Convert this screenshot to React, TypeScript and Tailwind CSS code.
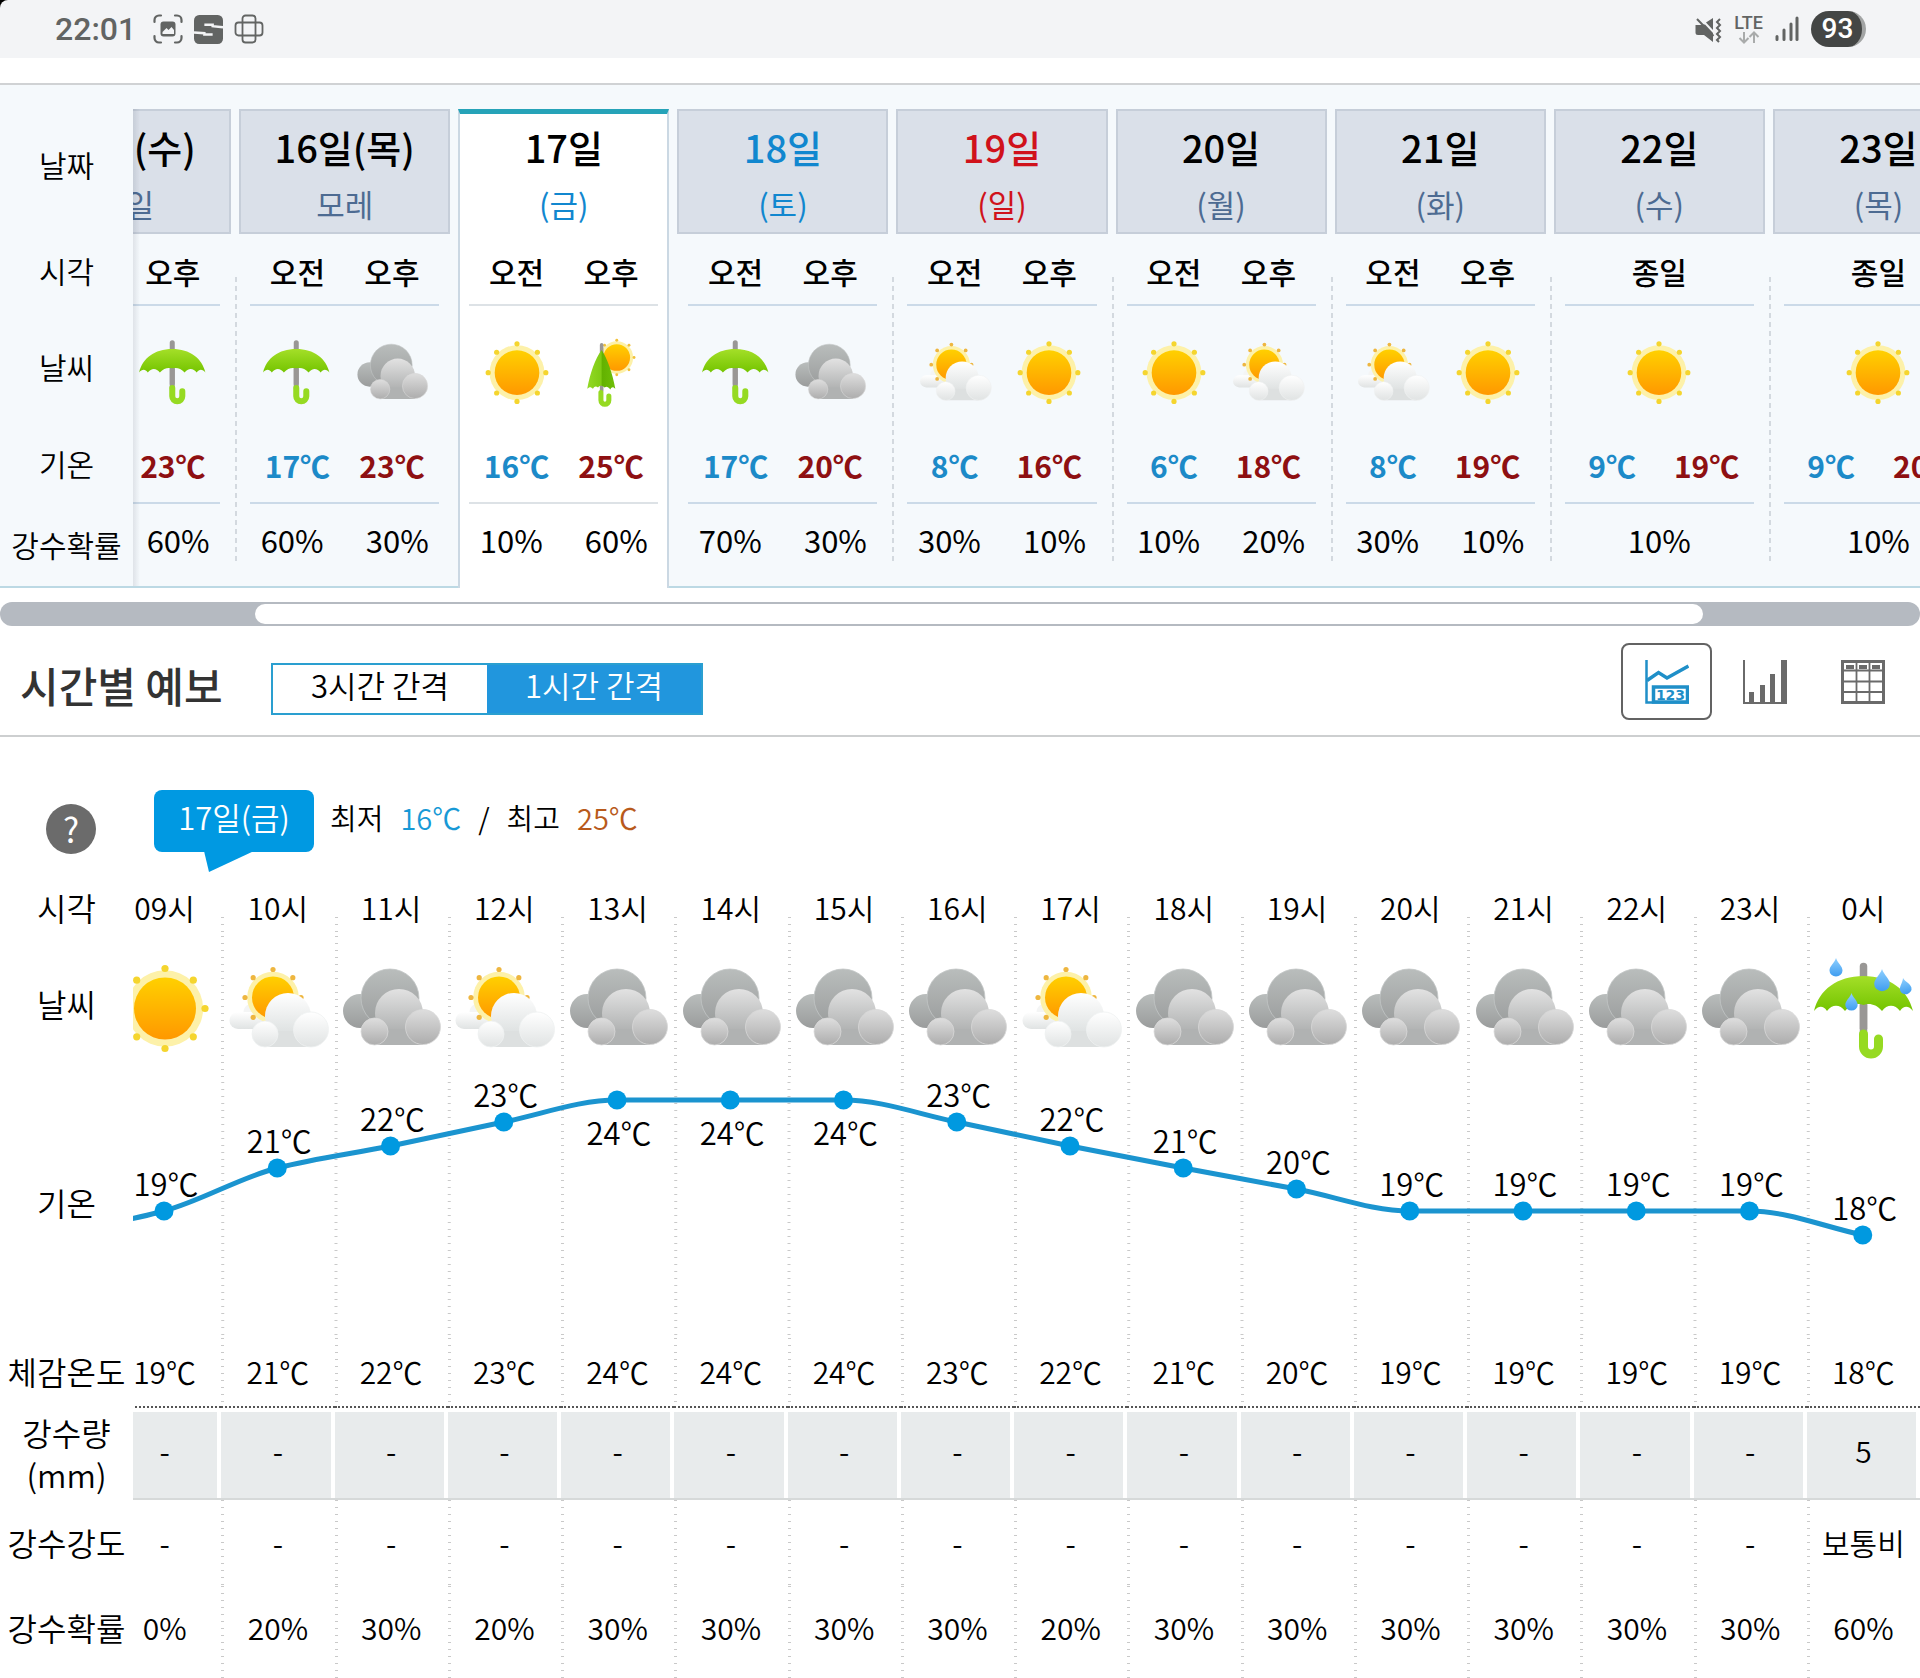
import { useLayoutEffect, useRef, useState } from "react";
import type { ReactNode } from "react";
import clsx from "clsx";

type Weather = "sun" | "cloudy" | "partly" | "umbrella" | "clearing" | "rain";

const days: {
  date: string;
  sub: string;
  tone?: "sat" | "sun";
  active?: boolean;
  times: string[];
  icons: Weather[];
  temps: [string, string];
  rain: string[];
}[] = [
  { date: "15일(수)", sub: "내일", times: ["오전", "오후"], icons: ["umbrella", "umbrella"], temps: ["17℃", "23℃"], rain: ["60%", "60%"] },
  { date: "16일(목)", sub: "모레", times: ["오전", "오후"], icons: ["umbrella", "cloudy"], temps: ["17℃", "23℃"], rain: ["60%", "30%"] },
  { date: "17일", sub: "(금)", active: true, times: ["오전", "오후"], icons: ["sun", "clearing"], temps: ["16℃", "25℃"], rain: ["10%", "60%"] },
  { date: "18일", sub: "(토)", tone: "sat", times: ["오전", "오후"], icons: ["umbrella", "cloudy"], temps: ["17℃", "20℃"], rain: ["70%", "30%"] },
  { date: "19일", sub: "(일)", tone: "sun", times: ["오전", "오후"], icons: ["partly", "sun"], temps: ["8℃", "16℃"], rain: ["30%", "10%"] },
  { date: "20일", sub: "(월)", times: ["오전", "오후"], icons: ["sun", "partly"], temps: ["6℃", "18℃"], rain: ["10%", "20%"] },
  { date: "21일", sub: "(화)", times: ["오전", "오후"], icons: ["partly", "sun"], temps: ["8℃", "19℃"], rain: ["30%", "10%"] },
  { date: "22일", sub: "(수)", times: ["종일"], icons: ["sun"], temps: ["9℃", "19℃"], rain: ["10%"] },
  { date: "23일", sub: "(목)", times: ["종일"], icons: ["sun"], temps: ["9℃", "20℃"], rain: ["10%"] },
];

const hours: { time: string; icon: Weather; temp: number; rain: string; amount?: string; level?: string }[] = [
  { time: "09시", icon: "sun", temp: 19, rain: "0%" },
  { time: "10시", icon: "partly", temp: 21, rain: "20%" },
  { time: "11시", icon: "cloudy", temp: 22, rain: "30%" },
  { time: "12시", icon: "partly", temp: 23, rain: "20%" },
  { time: "13시", icon: "cloudy", temp: 24, rain: "30%" },
  { time: "14시", icon: "cloudy", temp: 24, rain: "30%" },
  { time: "15시", icon: "cloudy", temp: 24, rain: "30%" },
  { time: "16시", icon: "cloudy", temp: 23, rain: "30%" },
  { time: "17시", icon: "partly", temp: 22, rain: "20%" },
  { time: "18시", icon: "cloudy", temp: 21, rain: "30%" },
  { time: "19시", icon: "cloudy", temp: 20, rain: "30%" },
  { time: "20시", icon: "cloudy", temp: 19, rain: "30%" },
  { time: "21시", icon: "cloudy", temp: 19, rain: "30%" },
  { time: "22시", icon: "cloudy", temp: 19, rain: "30%" },
  { time: "23시", icon: "cloudy", temp: 19, rain: "30%" },
  { time: "0시", icon: "rain", temp: 18, rain: "60%", amount: "5", level: "보통비" },
];

/* gradients shared by all weather icons */
function IconDefs() {
  const stops: [string, string, string][] = [
    ["g-sun", "#ffd000", "#ff9800"],
    ["g-back", "#b9bdbc", "#9a9c9c"],
    ["g-front", "#e2e2e2", "#a9abab"],
    ["g-puff", "#dedede", "#adadad"],
    ["g-white", "#ffffff", "#d9dddd"],
    ["g-wpuff", "#ffffff", "#e0e3e3"],
    ["g-green", "#a4df28", "#74c400"],
    ["g-drop", "#8fd0ff", "#3f9df0"],
  ];
  return (
    <svg className="absolute size-0" aria-hidden="true">
      <defs>
        {stops.map(([id, from, to]) => (
          <linearGradient key={id} id={id} x1="0" y1="0" x2="0" y2="1">
            <stop offset="0" stopColor={from} />
            <stop offset="1" stopColor={to} />
          </linearGradient>
        ))}
        <linearGradient id="g-closed" x1="0" y1="0" x2="1" y2="0">
          <stop offset="0" stopColor="#93d925" />
          <stop offset="0.5" stopColor="#7fcb14" />
          <stop offset="0.52" stopColor="#62b100" />
          <stop offset="1" stopColor="#6fbf08" />
        </linearGradient>
      </defs>
    </svg>
  );
}

function Sun({ cx, cy, r, ring, dot, color = "#f5d52e" }: { cx: number; cy: number; r: number; ring: number; dot: number; color?: string }) {
  return (
    <>
      <circle cx={cx} cy={cy} r={r * 1.23} fill="#fdf1a9" />
      {[0, 45, 90, 135, 180, 225, 270, 315].map((a) => (
        <circle
          key={a}
          cx={cx + ring * Math.cos((a * Math.PI) / 180)}
          cy={cy + ring * Math.sin((a * Math.PI) / 180)}
          r={dot}
          fill={color}
        />
      ))}
      <circle cx={cx} cy={cy} r={r} fill="url(#g-sun)" />
    </>
  );
}

function Umbrella() {
  return (
    <>
      <path d="M50.500 7.500V75" stroke="#999795" strokeWidth="7.500" strokeLinecap="round" />
      <path
        d="M1 52C6 31 24 17 50.500 17S95 31 100 52C96 47 91 46 87 52C82 45 74 45 69 52C63 45 56 44 50.500 46C45 44 38 45 32 52C27 45 19 45 14 52C10 46 5 47 1 52Z"
        fill="url(#g-green)"
      />
      <path d="M50.500 46V70" stroke="#999795" strokeWidth="7.500" />
      <path d="M50.500 75V87.500a7.500 7.500 0 0 0 15 0V80" stroke="#96da22" strokeWidth="9" strokeLinecap="round" fill="none" />
    </>
  );
}

function Drop({ x, y, s, turn = 0 }: { x: number; y: number; s: number; turn?: number }) {
  return (
    <path
      d="M0 0C1.500 5 6.500 8 6.500 12.500A6.500 6 0 0 1 -6.500 12.500C-6.500 8 -1.500 5 0 0Z"
      transform={`translate(${x} ${y}) rotate(${turn}) scale(${s})`}
      fill="url(#g-drop)"
    />
  );
}

function WeatherIcon({ kind, className }: { kind: Weather; className: string }) {
  return (
    <svg viewBox="0 0 100 100" className={clsx("shrink-0 overflow-visible", className)} fill="none" aria-hidden="true">
      {kind === "sun" && <Sun cx={50} cy={49.5} r={31} ring={40} dot={3.6} />}
      {kind === "cloudy" && (
        <>
          <circle cx="19" cy="52" r="17" fill="url(#g-back)" />
          <circle cx="49" cy="39" r="29" fill="url(#g-back)" stroke="#c2c5c5" strokeWidth="0.8" />
          <path d="M33.500 86V68L58 54L82 60V86Z" fill="#b3b5b5" />
          <circle cx="58" cy="54" r="24" fill="url(#g-front)" />
          <path d="M33 70H82V86H33Z" fill="#b0b2b2" />
          <circle cx="82" cy="68" r="17.500" fill="url(#g-puff)" stroke="#d8d8d8" strokeWidth="0.8" />
          <circle cx="33.500" cy="72.500" r="13.500" fill="url(#g-puff)" stroke="#d8d8d8" strokeWidth="0.8" />
        </>
      )}
      {kind === "partly" && (
        <>
          <circle cx="24" cy="53" r="8.500" fill="#f4f5f5" />
          <path d="M10 53H36V70H10A8.500 8.500 0 0 1 10 53Z" fill="url(#g-wpuff)" />
          <Sun cx={45} cy={38.5} r={21} ring={28} dot={2.6} color="#eeb63f" />
          <circle cx="60" cy="57" r="23" fill="url(#g-white)" />
          <path d="M37 72H83V88H37Z" fill="#dde0e0" />
          <circle cx="83" cy="70.500" r="17.500" fill="url(#g-wpuff)" stroke="#eff1f1" strokeWidth="0.8" />
          <circle cx="37" cy="75" r="13" fill="url(#g-wpuff)" stroke="#eff1f1" strokeWidth="0.8" />
        </>
      )}
      {kind === "umbrella" && (
        <g transform="translate(2 1) scale(0.93)">
          <Umbrella />
        </g>
      )}
      {kind === "rain" && (
        <>
          <Umbrella />
          <Drop x={23} y={-1} s={1} />
          <Drop x={69} y={10} s={1.2} />
          <Drop x={90} y={19} s={0.9} turn={-14} />
          <Drop x={38.5} y={34} s={0.95} />
        </>
      )}
      {kind === "clearing" && (
        <>
          <Sun cx={58} cy={28.5} r={18.5} ring={24} dot={2} color="#f2c23a" />
          <path d="M37 11V75" stroke="#999795" strokeWidth="5" strokeLinecap="round" />
          <path
            d="M37 18C45 30 52 50 56 72C53 69 51 69 49 73C46 69 44 68 41 70C38 67 34 67 32 70C29 68 27 68 25 72C22 69 20 69 17 72C21 50 28 30 37 18Z"
            fill="url(#g-closed)"
          />
          <path d="M36 77V88a5.500 5.500 0 0 0 11 0V82" stroke="#96da22" strokeWidth="7" strokeLinecap="round" />
        </>
      )}
    </svg>
  );
}

function StatusBar() {
  return (
    <div className="bg-black">
      <div className="flex h-[58px] items-center justify-between rounded-tl-lg bg-[#f3f4f6] pr-[54px] pl-[55px] font-[Roboto,sans-serif] text-[#626463]">
        <div className="flex items-center gap-[11px]">
          <span className="mr-[6px] text-[32px] leading-none font-medium">22:01</span>
          <svg viewBox="0 0 30 30" className="size-[30px]" fill="none" stroke="currentColor" strokeWidth="2.2" strokeLinecap="round">
            <path d="M1.500 8V6a4.500 4.500 0 0 1 4.500-4.500H8M22 1.500h2A4.500 4.500 0 0 1 28.500 6v2M28.500 22v2a4.500 4.500 0 0 1-4.500 4.500h-2M8 28.500H6A4.500 4.500 0 0 1 1.500 24v-2" />
            <rect x="7.500" y="7.500" width="15" height="15" rx="3" fill="currentColor" stroke="none" />
            <path d="M9.500 20v-2l4-4 2 2 3-3 2.500 3v4z" fill="#f3f4f6" stroke="none" />
          </svg>
          <svg viewBox="0 0 28 28" className="size-[29px]" fill="currentColor">
            <rect width="28" height="28" rx="5" />
            <path d="M10 9.500H18V10.800L28 11.800M0 16.800L10 17.600V18.800H18" fill="none" stroke="#f3f4f6" strokeWidth="2.400" />
          </svg>
          <svg viewBox="0 0 30 30" className="size-[30px]" fill="none" stroke="currentColor" strokeWidth="1.8">
            <rect x="8.500" y="1.500" width="13" height="27" rx="3" />
            <rect x="1.500" y="8.500" width="27" height="13" rx="3" />
          </svg>
        </div>
        <div className="flex items-center gap-3">
          <svg viewBox="0 0 28 28" className="size-[28px]" fill="currentColor">
            <path d="M1.500 10H6l5-0.500L19 18v9l-9-7H4a2.500 2.500 0 0 1-2.500-2.500z" />
            <path d="M12 7.500L19 3v12z" />
            <path d="M3 4l16.500 17" stroke="currentColor" strokeWidth="2" />
            <path d="M26 4l-3 3 3 3-3 3 3 3-3 3 3 3-3 3 2 2" stroke="currentColor" strokeWidth="2" fill="none" />
          </svg>
          <span className="flex flex-col items-center">
            <span className="text-[18px] leading-4 font-medium">LTE</span>
            <svg viewBox="0 0 22 13" className="h-[13px] w-[22px]" fill="none" stroke="#a9abab" strokeWidth="2">
              <path d="M6 1v10M1.500 7L6 11.500 10.500 7M16 12V2M11.500 6L16 1.500 20.500 6" />
            </svg>
          </span>
          <svg viewBox="0 0 24 26" className="h-[26px] w-[24px]" fill="none" stroke="currentColor" strokeWidth="3" strokeLinecap="round">
            <path d="M2 23.500v-3M9 23.500V14M16 23.500V8" />
            <path d="M22 23.500V2" />
          </svg>
          <span className="flex h-9 w-[55px] items-center justify-center rounded-full border-r-4 border-[#a2a4a4] bg-[#444645] pl-[2px] text-[28px] leading-none font-medium text-white">
            93
          </span>
        </div>
      </div>
    </div>
  );
}

function Scroller({ offset, className, children }: { offset: number; className?: string; children: ReactNode }) {
  const ref = useRef<HTMLDivElement>(null);
  useLayoutEffect(() => {
    if (ref.current) ref.current.scrollLeft = offset;
  }, [offset]);
  return (
    <div ref={ref} className={clsx("relative overflow-x-auto [scrollbar-width:none]", className)}>
      {children}
    </div>
  );
}

const weekLabel =
  "sticky left-0 z-10 bg-[#f5f9fc] p-0 text-[30px] leading-9 font-[350] after:absolute after:top-0 after:left-full after:h-full after:w-[7px] after:bg-linear-to-r after:from-[#3c465a]/12 after:to-transparent";

function WeekCell({ active, className, children }: { active?: boolean; className?: string; children: ReactNode }) {
  return (
    <div className={clsx("mx-1 h-full", active && "border-x-2 border-[#cbd8e3] bg-white")}>
      <div className={clsx("flex h-full items-center", active ? "mx-[9px] border-[#dde2e6]" : "mx-[11px] border-[#cbdae8]", className)}>
        {children}
      </div>
    </div>
  );
}

function WeekTable() {
  return (
    <section className="border-t-2 border-b-2 border-t-[#d0d2d4] border-b-[#bcd9e4] bg-[#f5f9fc] pt-6">
      <Scroller offset={117} className="-mb-[2px]">
        <table className="w-full min-w-[2105px] table-fixed border-separate border-spacing-0 text-center">
          <colgroup>
            <col className="w-[133px]" />
          </colgroup>
          <thead>
            <tr className="h-[125px]">
              <th scope="row" className={clsx(weekLabel, "pb-4")}>날짜</th>
              {days.map((d) => (
                <th key={d.date} scope="col" className="h-[125px] p-0 px-1 font-normal">
                  <button
                    type="button"
                    className={clsx(
                      "flex h-[125px] w-full flex-col items-center",
                      d.active ? "border-x-2 border-t-[5px] border-x-[#cbd8e3] border-t-[#26a3b8] bg-white pt-2" : "border-2 border-[#c6ced9] bg-[#dae0e9] pt-[11px]",
                    )}
                  >
                    <span className={clsx("text-[38px] leading-[50px] font-medium", d.tone === "sat" ? "text-[#1187cf]" : d.tone === "sun" ? "text-[#d0121b]" : "text-black")}>
                      {d.date}
                    </span>
                    <span
                      className={clsx(
                        "mt-[7px] text-[31px] leading-[50px]",
                        d.tone === "sat" || d.active ? "text-[#1187cf]" : d.tone === "sun" ? "text-[#d0121b]" : "text-[#4d6b92]",
                      )}
                    >
                      {d.sub}
                    </span>
                  </button>
                </th>
              ))}
            </tr>
          </thead>
          <tbody>
            <tr className="h-[72px]">
              <th scope="row" className={weekLabel}>시각</th>
              {days.map((d, i) => (
                <td key={d.date} className="relative h-[72px] p-0">
                  {i > 0 && !d.active && !days[i - 1].active && (
                    <span className="absolute top-[43px] left-0 h-[285px] w-[2px] bg-[repeating-linear-gradient(#d3d9df_0_5px,transparent_5px_9px)]" />
                  )}
                  <WeekCell active={d.active} className="border-b-2 pt-1">
                    {d.times.map((t) => (
                      <span key={t} className="flex-1 text-[30px] leading-9 font-medium">{t}</span>
                    ))}
                  </WeekCell>
                </td>
              ))}
            </tr>
            <tr className="h-[124px]">
              <th scope="row" className={clsx(weekLabel, "pb-1")}>날씨</th>
              {days.map((d) => (
                <td key={d.date} className="h-[124px] p-0">
                  <WeekCell active={d.active} className="pt-[10px]">
                    {d.icons.map((k, i) => (
                      <span key={i} className="flex flex-1 justify-center">
                        <WeatherIcon kind={k} className="size-[72px]" />
                      </span>
                    ))}
                  </WeekCell>
                </td>
              ))}
            </tr>
            <tr className="h-[74px]">
              <th scope="row" className={clsx(weekLabel, "pb-2")}>기온</th>
              {days.map((d) => (
                <td key={d.date} className="h-[74px] p-0">
                  <WeekCell active={d.active} className="border-b-2 pb-[2px]">
                    <span className="flex-1 text-[30px] leading-9 font-bold text-[#1c8ac8]">{d.temps[0]}</span>
                    <span className="flex-1 text-[30px] leading-9 font-bold text-[#8e1012]">{d.temps[1]}</span>
                  </WeekCell>
                </td>
              ))}
            </tr>
            <tr className="h-[84px]">
              <th scope="row" className={clsx(weekLabel, "border-b-2 border-[#bcd9e4] pb-[2px]")}>강수확률</th>
              {days.map((d) => (
                <td key={d.date} className="h-[84px] p-0">
                  <WeekCell active={d.active} className="pb-3">
                    <span className={clsx("-mx-[5px] flex flex-1", d.rain.length > 1 ? "justify-between" : "justify-center")}>
                      {d.rain.map((r, i) => (
                        <span key={i} className="w-[94px] text-[31px] leading-9">{r}</span>
                      ))}
                    </span>
                  </WeekCell>
                </td>
              ))}
            </tr>
          </tbody>
        </table>
      </Scroller>
    </section>
  );
}

const views = [
  {
    name: "그래프",
    icon: (
      <svg viewBox="0 0 44 44" className="size-11" fill="none" stroke="currentColor">
        <path d="M1.500 0V42.500H44" strokeWidth="2.500" />
        <path d="M2 20.500L13.500 12.500 22 18 43.500 6" strokeWidth="3.500" />
        <rect x="8.500" y="27" width="34" height="15" strokeWidth="3.500" />
        <text x="25.500" y="39.500" textAnchor="middle" fontSize="14" fontWeight="700" fill="currentColor" stroke="none" fontFamily="DejaVu Sans, sans-serif">
          123
        </text>
      </svg>
    ),
  },
  {
    name: "막대",
    icon: (
      <svg viewBox="0 0 44 44" className="size-11" fill="currentColor">
        <path d="M0 0h2v42h4V32h5v10h6V25h5v17h5V14h5v28h6V0h6v44H0z" />
      </svg>
    ),
  },
  {
    name: "표",
    icon: (
      <svg viewBox="0 0 44 44" className="size-11" fill="none" stroke="currentColor">
        <rect x="1.500" y="1.500" width="41" height="41" strokeWidth="3" />
        <path d="M2 10.500H42M2 21.500H42M2 32H42M15.500 2V42M28.500 2V42" strokeWidth="1.800" />
        <path d="M5 7h8M18 7h8M31 7h8" strokeWidth="4" />
      </svg>
    ),
  },
];

function HourlyHeader() {
  const [gap, setGap] = useState(1);
  const [view, setView] = useState(0);
  return (
    <div className="flex h-[111px] items-center justify-between border-b-2 border-[#cdcfd0] pr-3 pl-5">
      <div className="flex items-center pt-4">
        <h2 className="w-[251px] pb-2 text-[42px] leading-[50px] font-medium text-[#333]">시간별 예보</h2>
        <div className="flex h-[52px] w-[432px] border-2 border-[#2a9fd0]">
          {["3시간 간격", "1시간 간격"].map((t, i) => (
            <button
              key={t}
              type="button"
              aria-pressed={gap === i}
              onClick={() => setGap(i)}
              className={clsx("flex-1 pb-[8px] text-[31px] leading-10 font-[350]", gap === i ? "bg-[#2196dd] text-white" : "bg-white text-black")}
            >
              {t}
            </button>
          ))}
        </div>
      </div>
      <div className="flex items-center gap-[7px] pt-[2px]">
        {views.map((v, i) => (
          <button
            key={v.name}
            type="button"
            aria-label={v.name}
            aria-pressed={view === i}
            onClick={() => setView(i)}
            className={clsx(
              "flex h-[77px] w-[91px] items-center justify-center rounded-lg border-2",
              view === i ? "border-[#636363] text-[#1f8fc8]" : "border-transparent text-[#6a6a6a]",
            )}
          >
            {v.icon}
          </button>
        ))}
      </div>
    </div>
  );
}

const CHART_W = 1812;
const CHART_H = 256;
const levels: Record<number, number> = { 18: 153, 19: 129, 20: 107, 21: 86, 22: 64, 23: 40, 24: 18 };
const STEP = CHART_W / hours.length;

/* monotone cubic through the hourly points */
function linePath(pts: [number, number][]) {
  const slope = pts.slice(1).map((p, i) => (p[1] - pts[i][1]) / (p[0] - pts[i][0]));
  const tan = pts.map((_, i) => {
    if (i === 0) return slope[0];
    if (i === pts.length - 1) return slope[i - 1];
    const [a, b] = [slope[i - 1], slope[i]];
    return a * b <= 0 ? 0 : (2 * a * b) / (a + b);
  });
  return pts.slice(1).reduce((d, [x, y], i) => {
    const [px, py] = pts[i];
    const h = (x - px) / 3;
    return `${d}C${px + h} ${py + tan[i] * h} ${x - h} ${y - tan[i + 1] * h} ${x} ${y}`;
  }, `M${pts[0][0]} ${pts[0][1]}`);
}

function TempChart() {
  const pts = hours.map((h, i): [number, number] => [i * STEP + 56, levels[h.temp]]);
  return (
    <svg viewBox={`0 0 ${CHART_W} ${CHART_H}`} className="block h-auto w-full" role="img" aria-label="기온">
      <path d={linePath([[56 - STEP, levels[18]], ...pts])} fill="none" stroke="#1b94cf" strokeWidth="5" />
      {pts.map(([x, y], i) => (
        <g key={i}>
          <circle cx={x} cy={y} r="9.500" fill="#0099e0" />
          <text x={x + 2} y={hours[i].temp === 24 ? y + 45 : y - 15} textAnchor="middle" className="text-[31px] font-[350]">
            {hours[i].temp}℃
          </text>
        </g>
      ))}
    </svg>
  );
}

const hourLabel = "sticky left-0 z-10 bg-white p-0 text-[32px] leading-[42px] font-[350]";
const hourText = "p-0 text-[30px] leading-[42px] font-[350]";
const dots = "bg-[repeating-linear-gradient(#c9c9c9_0_1px,transparent_1px_7px)] bg-[length:3px_100%] bg-no-repeat";

function HourRow({ label, values, height, pad }: { label: string; values: ReactNode[]; height: string; pad?: string }) {
  return (
    <tr className={height}>
      <th scope="row" className={clsx(hourLabel, pad)}>{label}</th>
      {values.map((v, i) => (
        <td key={i} className={clsx(hourText, dots, pad)}>{v}</td>
      ))}
    </tr>
  );
}

function HourTable() {
  return (
    <Scroller offset={25}>
      <table className="w-full min-w-[1945px] table-fixed border-separate border-spacing-0 text-center">
        <colgroup>
          <col className="w-[133px]" />
        </colgroup>
        <thead>
          <tr className="h-[54px]">
            <th scope="row" className={clsx(hourLabel, "pb-1")}>시각</th>
            {hours.map((h) => (
              <th key={h.time} scope="col" className={clsx(hourText, dots, "bg-[position:0_35px] pb-1")}>
                {h.time}
              </th>
            ))}
          </tr>
        </thead>
        <tbody>
          <tr className="h-[146px]">
            <th scope="row" className={clsx(hourLabel, "pb-3")}>날씨</th>
            {hours.map((h) => (
              <td key={h.time} className={clsx("p-0", dots)}>
                <WeatherIcon kind={h.icon} className="mx-auto size-[100px]" />
              </td>
            ))}
          </tr>
          <tr className="h-[256px]">
            <th scope="row" className={clsx(hourLabel, "pb-4")}>기온</th>
            <td
              colSpan={16}
              className="bg-[repeating-linear-gradient(to_bottom,transparent_0_1px,#fff_1px_7px),linear-gradient(to_right,#c9c9c9_3px,transparent_3px)] bg-[length:100%_100%,6.25%_100%] p-0 align-top"
            >
              <TempChart />
            </td>
          </tr>
          <HourRow height="h-[68px]" pad="pb-[2px]" label="체감온도" values={hours.map((h) => `${h.temp}℃`)} />
          <tr className="h-[94px]">
            <th scope="row" className={clsx(hourLabel, "leading-[41px]")}>
              강수량
              <br />
              (mm)
            </th>
            {hours.map((h) => (
              <td key={h.time} className="h-[94px] border-t-2 border-b-2 border-t-[#555] border-b-[#d6d9d9] [border-top-style:dotted] p-0 pt-1 pr-1">
                <div className={clsx(hourText, "flex h-full items-center justify-center bg-[#e8ebec] pb-[10px]! pl-1!")}>{h.amount ?? "-"}</div>
              </td>
            ))}
          </tr>
          <HourRow height="h-[86px]" pad="pb-[2px]" label="강수강도" values={hours.map((h) => h.level ?? "-")} />
          <HourRow height="h-[92px]" pad="pb-[10px]" label="강수확률" values={hours.map((h) => h.rain)} />
        </tbody>
      </table>
    </Scroller>
  );
}

export default function App() {
  return (
    <main className="w-full overflow-hidden bg-white font-['Noto_Sans_CJK_KR',sans-serif] text-black">
      <IconDefs />
      <StatusBar />
      <div className="h-[25px]" />
      <WeekTable />
      <div className="mt-[14px] h-6 rounded-full bg-[#b5bac1] py-[2px]">
        <div className="ml-[13.300%] h-5 w-[75.400%] rounded-full bg-white" />
      </div>
      <HourlyHeader />
      <div className="flex h-[145px] items-start pl-[46px]">
        <button type="button" aria-label="도움말" className="mt-[67px] size-[50px] rounded-full bg-[#6b6b6b] text-[34px] leading-[46px] text-white">
          ?
        </button>
        <div className="relative mt-[53px] ml-[58px] h-[62px] w-[160px] rounded-lg bg-[#0099e2] text-center text-[31px] leading-[54px] font-[350] text-white">
          17일(금)
          <svg viewBox="0 0 50 22" className="absolute top-full left-[50px] -mt-px h-[22px] w-[50px]">
            <path d="M0 0H50L5 21Z" fill="#0099e2" />
          </svg>
        </div>
        <p className="mt-[53px] ml-4 flex gap-[17px] text-[29px] leading-[54px] font-[350]">
          <span>최저</span>
          <span className="text-[#1799d6]">16℃</span>
          <span>/</span>
          <span>최고</span>
          <span className="text-[#b85a1c]">25℃</span>
        </p>
      </div>
      <HourTable />
    </main>
  );
}
